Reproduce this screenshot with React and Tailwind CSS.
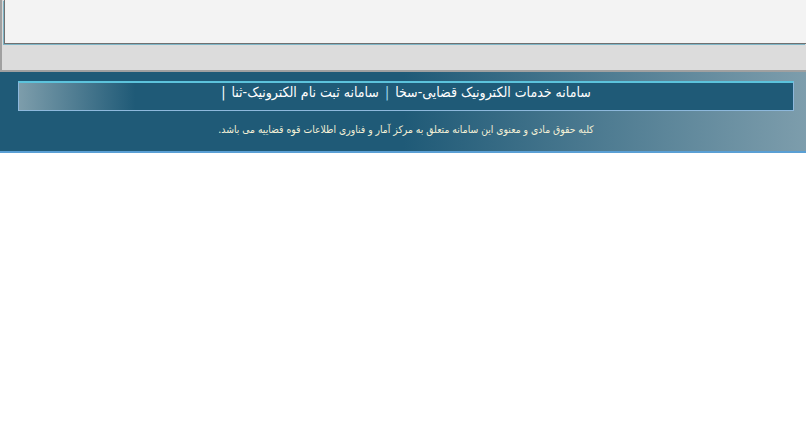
import React from 'react'

function App() {
  return (
    <div className="w-[806px] h-[425px] bg-white overflow-hidden" style={{ fontFamily: '"DejaVu Sans Condensed", "DejaVu Sans", sans-serif' }}>
      {/* top panel */}
      <div className="h-[72px] bg-[#dcdcdc] border-l-2 border-b-2 border-[#a0a0a0]">
        <div className="ml-[2px] h-[44px] bg-[#f3f3f3] border-l border-b border-[#707070] shadow-[-1px_1px_0_#7fb5c6]"></div>
      </div>

      {/* footer */}
      <footer
        dir="rtl"
        className="h-[81px] pt-[9px] bg-[linear-gradient(to_right,#1f5a77_0%,#1f5a77_50%,#7d9dac_100%)] border-b-2 border-[#5a9fd4]"
      >
        <div className="mr-[12px] ml-[18px] h-[30px] pb-[8px] flex items-center justify-center border-t-2 border-t-[#5cc3dc] border-x border-b border-[#8db8dc] bg-[linear-gradient(to_left,#1f5a77_0%,#1f5a77_85%,#7d9dab_100%)] text-white text-[14px]">
          <span>سامانه خدمات الکترونیک قضایی-سخا</span>
          <span className="mx-[6px] text-[#9fdcf0]">|</span>
          <span>سامانه ثبت نام الکترونیک-ثنا</span>
          <span className="mr-[6px]">|</span>
        </div>
        <p className="mt-[11px] pl-[6px] text-center text-[10.3px] text-[#f4f0d6]">
          کلیه حقوق مادی و معنوی این سامانه متعلق به مرکز آمار و فناوری اطلاعات قوه قضاییه می باشد.
        </p>
      </footer>
    </div>
  )
}

export default App
